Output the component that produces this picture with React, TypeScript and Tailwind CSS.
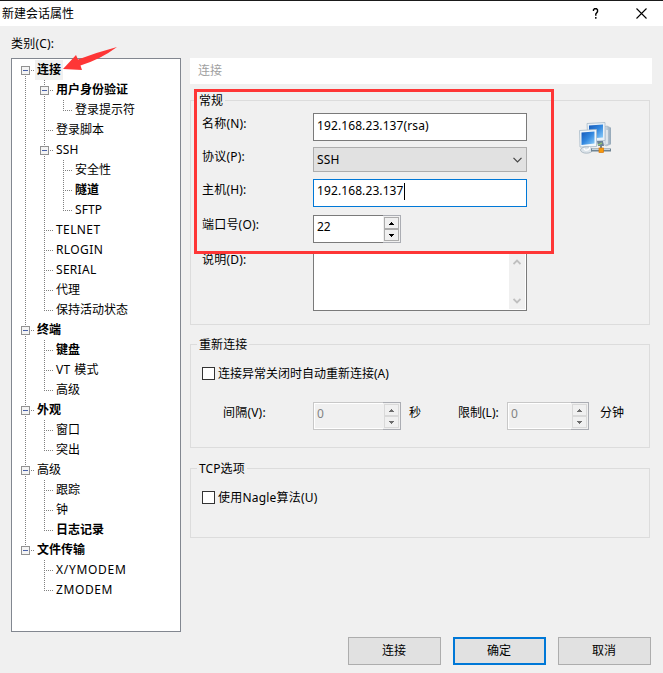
import type { ReactNode } from 'react';

type TreeItem = {
  label: string;
  level: number;
  bold?: boolean;
  open?: boolean;
  selected?: boolean;
  tracking?: string;
};

const TREE: TreeItem[] = [
  { label: '连接', level: 0, bold: true, open: true, selected: true },
  { label: '用户身份验证', level: 1, bold: true, open: true },
  { label: '登录提示符', level: 2 },
  { label: '登录脚本', level: 1 },
  { label: 'SSH', level: 1, open: true, tracking: 'tracking-[0.2px]' },
  { label: '安全性', level: 2 },
  { label: '隧道', level: 2, bold: true },
  { label: 'SFTP', level: 2, tracking: 'tracking-[0.1px]' },
  { label: 'TELNET', level: 1, tracking: 'tracking-[0.4px]' },
  { label: 'RLOGIN', level: 1, tracking: 'tracking-[0.4px]' },
  { label: 'SERIAL', level: 1, tracking: 'tracking-[0.3px]' },
  { label: '代理', level: 1 },
  { label: '保持活动状态', level: 1 },
  { label: '终端', level: 0, bold: true, open: true },
  { label: '键盘', level: 1, bold: true },
  { label: 'VT 模式', level: 1, tracking: 'tracking-[0.4px]' },
  { label: '高级', level: 1 },
  { label: '外观', level: 0, bold: true, open: true },
  { label: '窗口', level: 1 },
  { label: '突出', level: 1 },
  { label: '高级', level: 0, open: true },
  { label: '跟踪', level: 1 },
  { label: '钟', level: 1 },
  { label: '日志记录', level: 1, bold: true },
  { label: '文件传输', level: 0, bold: true, open: true },
  { label: 'X/YMODEM', level: 1, tracking: 'tracking-[0.7px]' },
  { label: 'ZMODEM', level: 1, tracking: 'tracking-[0.6px]' },
];

// true when the branch at `level` carries on below row `index`
function continues(index: number, level: number) {
  for (let i = index + 1; i < TREE.length; i++) {
    if (TREE[i].level < level) return false;
    if (TREE[i].level === level) return true;
  }
  return false;
}

function Guide({ index, column }: { index: number; column: number }) {
  const item = TREE[index];
  const own = column === item.level;
  const below = continues(index, column);
  const above = own && index > 0;

  return (
    <svg width="19" height="20" viewBox="0 0 19 20" className="shrink-0" shapeRendering="crispEdges">
      <g stroke="#808080" strokeDasharray="1 1">
        {(above || (!own && below)) && <path d="M9.5 0V10" />}
        {below && <path d="M9.5 10V20" />}
        {own && <path d="M9 10.5H18" />}
      </g>
      {own && item.open && (
        <>
          <rect x="5.5" y="6.5" width="8" height="8" rx="1" fill="#f4f4f4" stroke="#919191" />
          <path d="M7 10.5H12" stroke="#4a62a8" />
        </>
      )}
    </svg>
  );
}

function TreeRow({ item, index }: { item: TreeItem; index: number }) {
  return (
    <div className="flex h-5 items-center">
      {Array.from({ length: item.level + 1 }, (_, c) => (
        <Guide key={c} index={index} column={c} />
      ))}
      <span
        className={`h-5 px-0.5 leading-[19px] ${item.bold ? 'font-bold' : ''} ${item.selected ? 'bg-[#f0f0f0]' : ''} ${item.tracking ?? ''}`}
      >
        {item.label}
      </span>
    </div>
  );
}

function Group({ title, className, children }: { title: string; className: string; children: ReactNode }) {
  return (
    <section className={`w-[460px] border border-[#dcdcdc] ${className}`}>
      <h2 className="-mt-[10px] ml-1.5 h-5 w-fit bg-[#f0f0f0] px-0.5 leading-[19px] tracking-[0.1px]">{title}</h2>
      {children}
    </section>
  );
}

function Spinner({ value, disabled, className }: { value: string; disabled?: boolean; className: string }) {
  return (
    <div
      className={`flex h-7 border ${disabled ? 'border-[#c8c8c8] bg-[#f0f0f0] text-[#838383]' : 'border-[#7a7a7a] bg-white'} ${className}`}
    >
      <span
        className={`flex-1 border border-r-0 pl-0.5 ${disabled ? 'border-white leading-[20px]' : 'border-transparent leading-[19px]'}`}
      >
        {value}
      </span>
      <div className="-my-px -mr-px flex w-[18px] flex-col border border-l-0 border-[#abadb3] bg-[#f0f0f0] p-px">
        {['M2 4h1V3h1V2h1v1h1v1h1v1H2z', 'M2 2h5v1H6v1H5v1H4V4H3V3H2z'].map((d) => (
          <span
            key={d}
            className={`flex flex-1 items-center justify-center border ${disabled ? 'border-[#d9d9d9]' : 'border-[#acacac]'}`}
          >
            <svg width="9" height="7" viewBox="0 0 9 7" shapeRendering="crispEdges">
              <path d={d} fill={disabled ? '#6d6d6d' : '#000'} />
            </svg>
          </span>
        ))}
      </div>
    </div>
  );
}

function Field({ label, className, children }: { label: string; className: string; children: ReactNode }) {
  return (
    <div className={`flex items-start pl-[11px] ${className}`}>
      <label className="w-[111px] shrink-0 tracking-[0.2px]">{label}</label>
      {children}
    </div>
  );
}

function Check({ label, className }: { label: string; className: string }) {
  return (
    <label className={`flex h-[13px] items-center gap-[3px] pl-[11px] ${className}`}>
      <span className="size-[13px] border border-[#333] bg-white" />
      <span className="leading-5">{label}</span>
    </label>
  );
}

function NetworkIcon() {
  return (
    <svg width="32" height="32" viewBox="0 0 32 32">
      <defs>
        <linearGradient id="screen" x1="0" y1="0" x2="1" y2="1">
          <stop offset="0" stopColor="#1458b8" />
          <stop offset="0.5" stopColor="#3388df" />
          <stop offset="1" stopColor="#8fd0fa" />
        </linearGradient>
        <linearGradient id="tower" x1="0" y1="0" x2="1" y2="0">
          <stop offset="0" stopColor="#f3f8fc" />
          <stop offset="1" stopColor="#91a6b8" />
        </linearGradient>
      </defs>
      <path d="M24 5l4-1 4 2v16l-5 2-4-3z" fill="url(#tower)" stroke="#9eafbd" strokeWidth=".6" />
      <path d="M28 8v14" stroke="#fff" />
      <path d="M8 1.5L26 .5v18l-17 1z" fill="#e8f1f8" stroke="#a8bac8" strokeWidth=".8" />
      <path d="M10 3.5l14-1v13l-14 1z" fill="url(#screen)" />
      <path d="M18 19h6l1 5h-6z" fill="#6c8296" />
      <path d="M.5 8.5L17.5 7.5v17L1 25z" fill="#f1f7fb" stroke="#a8bac8" strokeWidth=".8" />
      <path d="M2.5 10.5l13-1v12l-13 1.5z" fill="url(#screen)" />
      <ellipse cx="7.5" cy="28" rx="6" ry="3.2" fill="#dce4ea" stroke="#a2b0bb" strokeWidth=".8" />
      <path d="M5 26c0 3 5 3 6-1" fill="none" stroke="#fff" strokeWidth="1.2" />
      <path d="M12 28h20" stroke="#6f8493" strokeWidth="3" />
      <path d="M13 27.5h18" stroke="#c8d5dd" />
      <path d="M22 20v6" stroke="#6f8493" strokeWidth="2" />
      <rect x="20" y="26" width="4.5" height="4.5" fill="#f79a0c" stroke="#d87509" strokeWidth=".7" />
      <path d="M19 23l4-2" stroke="#9bdc62" strokeWidth="1" />
    </svg>
  );
}

export default function App() {
  return (
    <div className="relative flex h-[673px] w-[663px] flex-col overflow-hidden bg-[#f0f0f0] font-['Noto_Sans','Noto_Sans_CJK_SC',sans-serif] text-[12px] whitespace-nowrap text-black">
      <header className="flex h-[26px] shrink-0 items-center border-t border-[#1a1a1a] bg-white pl-0.5">
        <h1 className="flex-1 leading-5">新建会话属性</h1>
        <svg width="8" height="11" viewBox="0 0 8 11" className="mr-9" fill="none" stroke="#000" strokeWidth="1.4">
          <path d="M1.500 3V1.800L2.500 .8h2l1 1v2L3.800 6v1.800M3.800 9v1.700" />
        </svg>
        <svg width="11" height="11" viewBox="0 0 11 11" className="mr-4" stroke="#000" strokeWidth="1.1">
          <path d="M.5.5l10 10M10.500 .5l-10 10" />
        </svg>
      </header>

      <div className="h-8 shrink-0 pt-2 pl-[11px] leading-5 tracking-[0.2px]">类别(C):</div>

      <main className="flex h-[574px] shrink-0 gap-[9px] pl-[11px]">
        <nav className="w-[170px] border border-[#828790] bg-white pt-px pl-1">
          {TREE.map((item, i) => (
            <TreeRow key={i} item={item} index={i} />
          ))}
        </nav>

        <div className="w-[462px]">
          <div className="h-[26px] bg-white pl-2 leading-[25px] text-[#a0a0a0]">连接</div>

          <Group title="常规" className="mt-4 flex h-[225px] flex-col">
            <div className="flex">
              <div className="w-[336px]">
                <Field label="名称(N):" className="mt-0.5 h-[34px] leading-[22px]">
                  <div className="h-7 flex-1 border border-[#7a7a7a] bg-white pl-[3px] leading-[23px] tracking-[0.1px]">
                    192.168.23.137(rsa)
                  </div>
                </Field>
                <Field label="协议(P):" className="h-8 leading-5">
                  <div className="flex h-[25px] flex-1 items-center justify-between border border-[#adadad] bg-[#e1e1e1] pr-1 pl-[3px] tracking-[0.2px]">
                    SSH
                    <svg width="9" height="6" viewBox="0 0 9 6" fill="none" stroke="#444" strokeWidth="1.2">
                      <path d="M.5.8l4 4 4-4" />
                    </svg>
                  </div>
                </Field>
                <Field label="主机(H):" className="h-9 leading-[22px]">
                  <div className="flex h-7 flex-1 border border-[#0078d7] bg-white pl-[3px] leading-[22px] tracking-[0.1px]">
                    192.168.23.137
                    <span className="mt-[3px] h-[17px] w-px bg-black" />
                  </div>
                </Field>
                <Field label="端口号(O):" className="h-9 leading-5">
                  <Spinner value="22" className="w-[88px]" />
                </Field>
                <Field label="说明(D):" className="h-[62px] leading-[18px]">
                  <div className="flex h-[60px] flex-1 justify-end border border-[#7a7a7a] bg-white p-px">
                    <div className="flex w-4 flex-col items-center justify-between bg-[#f0f0f0] pt-1.5 pb-[5px]">
                      <svg width="8" height="6" viewBox="0 0 8 6" fill="none" stroke="#bfbfbf" strokeWidth="1.8">
                        <path d="M.5 5L4 1.500 7.500 5" />
                      </svg>
                      <svg width="8" height="6" viewBox="0 0 8 6" fill="none" stroke="#bfbfbf" strokeWidth="1.8">
                        <path d="M.5 1L4 4.500 7.500 1" />
                      </svg>
                    </div>
                  </div>
                </Field>
              </div>
              <div className="pt-[11px] pl-[52px]">
                <NetworkIcon />
              </div>
            </div>
          </Group>

          <Group title="重新连接" className="mt-[19px] h-[104px]">
            <Check label="连接异常关闭时自动重新连接(A)" className="mt-3" />
            <div className="mt-[22px] flex leading-[22px]">
              <span className="ml-8 w-[90px] tracking-[0.2px]">间隔(V):</span>
              <Spinner value="0" disabled className="w-[88px]" />
              <span className="ml-2 w-[49px]">秒</span>
              <span className="w-[49px]">限制(L):</span>
              <Spinner value="0" disabled className="w-[82px]" />
              <span className="ml-[11px]">分钟</span>
            </div>
          </Group>

          <Group title="TCP选项" className="mt-5 h-[70px]">
            <Check label="使用Nagle算法(U)" className="mt-3 tracking-[0.2px]" />
          </Group>
        </div>
      </main>

      <footer className="mt-[5px] flex gap-3 pl-[348px]">
        <button className="h-7 w-[93px] border border-[#adadad] bg-[#e1e1e1] pr-px">连接</button>
        <button className="h-7 w-[93px] border-2 border-[#0078d7] bg-[#e1e1e1] pr-px">确定</button>
        <button className="h-7 w-[93px] border border-[#adadad] bg-[#e1e1e1] pr-px">取消</button>
      </footer>

      {/* Markup drawn over the dialog */}
      <div className="absolute top-[89px] left-[194px] h-[165px] w-[360px] border-[3px] border-[#fe3636]" />
      <svg width="56" height="26" viewBox="62 46 56 26" className="absolute top-[46px] left-[62px]">
        <path d="M63 69L76 55l2 4.500Q98 52 117 47 101 59 80.500 65.500L82 70z" fill="#fe3636" />
      </svg>
    </div>
  );
}
